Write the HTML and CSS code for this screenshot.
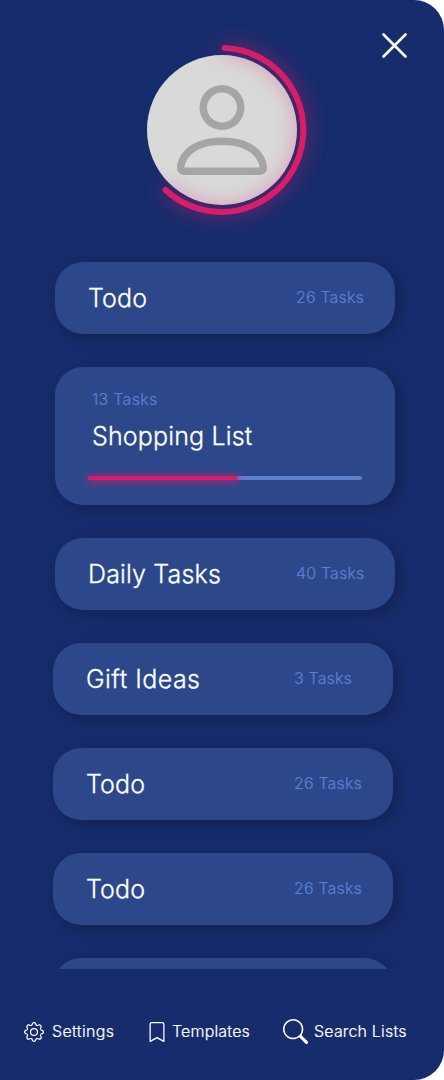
FILE: index.html
```html
<!DOCTYPE html>
<html lang="en">
<head>
<meta charset="utf-8">
<title>Task lists</title>
<link rel="stylesheet" href="styles.css">
</head>
<body>
<main class="drawer">
  <header class="profile">
    <svg class="avatar" viewBox="0 0 240 240" width="240" height="240">
      <circle cx="120" cy="120" r="75" fill="#d9d9d9"/>
      <g transform="translate(60 60) scale(7.5)" fill="#a5a5a5"><path d="M8 8a3 3 0 1 0 0-6 3 3 0 0 0 0 6zm2-3a2 2 0 1 1-4 0 2 2 0 0 1 4 0zm4 8c0 1-1 1-1 1H3s-1 0-1-1 1-4 6-4 6 3 6 4zm-1-.004c-.001-.246-.154-.986-.832-1.664C11.516 10.68 10.289 10 8 10c-2.29 0-3.516.68-4.168 1.332-.678.678-.83 1.418-.832 1.664h10z"/></g>
      <path class="ring" d="M122.500 38A82 82 0 1 1 63.500 180"/>
    </svg>
    <button class="close" aria-label="Close"><svg width="26" height="26" viewBox="0 0 26 26"><path d="M1.500 2.500l22 22M23.500 2.500L1.500 24.500"/></svg></button>
  </header>
  <section class="lists">
    <article class="card"><h2>Todo</h2><span class="count">26 Tasks</span></article>
    <article class="card featured">
      <span class="count">13 Tasks</span>
      <h2>Shopping List</h2>
      <div class="track"><div class="progress"></div></div>
    </article>
    <article class="card"><h2>Daily Tasks</h2><span class="count">40 Tasks</span></article>
    <article class="card shifted"><h2 class="wide">Gift Ideas</h2><span class="count">3 Tasks</span></article>
    <article class="card shifted"><h2>Todo</h2><span class="count">26 Tasks</span></article>
    <article class="card shifted"><h2>Todo</h2><span class="count">26 Tasks</span></article>
    <article class="card shifted"></article>
  </section>
  <nav class="footer">
    <a class="item settings"><svg width="20" height="20" viewBox="0 0 16 16"><path d="M8 4.754a3.246 3.246 0 1 0 0 6.492 3.246 3.246 0 0 0 0-6.492zM5.754 8a2.246 2.246 0 1 1 4.492 0 2.246 2.246 0 0 1-4.492 0z"/><path d="M9.796 1.343c-.527-1.790-3.065-1.790-3.592 0l-.094.319a.873.873 0 0 1-1.255.520l-.292-.160c-1.640-.892-3.433.902-2.540 2.541l.159.292a.873.873 0 0 1-.520 1.255l-.319.094c-1.790.527-1.790 3.065 0 3.592l.319.094a.873.873 0 0 1 .520 1.255l-.160.292c-.892 1.640.901 3.434 2.541 2.540l.292-.159a.873.873 0 0 1 1.255.520l.094.319c.527 1.790 3.065 1.790 3.592 0l.094-.319a.873.873 0 0 1 1.255-.520l.292.160c1.640.893 3.434-.902 2.540-2.541l-.159-.292a.873.873 0 0 1 .520-1.255l.319-.094c1.790-.527 1.790-3.065 0-3.592l-.319-.094a.873.873 0 0 1-.520-1.255l.160-.292c.893-1.640-.902-3.433-2.541-2.540l-.292.159a.873.873 0 0 1-1.255-.520l-.094-.319zm-2.633.283c.246-.835 1.428-.835 1.674 0l.094.319a1.873 1.873 0 0 0 2.693 1.115l.291-.160c.764-.415 1.600.420 1.184 1.185l-.159.292a1.873 1.873 0 0 0 1.116 2.692l.318.094c.835.246.835 1.428 0 1.674l-.319.094a1.873 1.873 0 0 0-1.115 2.693l.160.291c.415.764-.420 1.600-1.185 1.184l-.291-.159a1.873 1.873 0 0 0-2.693 1.116l-.094.318c-.246.835-1.428.835-1.674 0l-.094-.319a1.873 1.873 0 0 0-2.692-1.115l-.292.160c-.764.415-1.600-.420-1.184-1.185l.159-.291A1.873 1.873 0 0 0 1.945 8.930l-.319-.094c-.835-.246-.835-1.428 0-1.674l.319-.094A1.873 1.873 0 0 0 3.060 4.377l-.160-.292c-.415-.764.420-1.600 1.185-1.184l.292.159a1.873 1.873 0 0 0 2.692-1.115l.094-.319z"/></svg><span>Settings</span></a>
    <a class="item templates"><svg width="20" height="20" viewBox="0 0 16 16"><path d="M2 2a2 2 0 0 1 2-2h8a2 2 0 0 1 2 2v13.500a.5.5 0 0 1-.777.416L8 13.101l-5.223 2.815A.5.5 0 0 1 2 15.500V2zm2-1a1 1 0 0 0-1 1v12.566l4.723-2.482a.5.5 0 0 1 .554 0L13 14.566V2a1 1 0 0 0-1-1H4z"/></svg><span>Templates</span></a>
    <a class="item search"><svg width="25" height="25" viewBox="0 0 16 16"><path d="M11.742 10.344a6.500 6.500 0 1 0-1.397 1.398h-.001c.030.040.062.078.098.115l3.850 3.850a1 1 0 0 0 1.415-1.414l-3.850-3.850a1.007 1.007 0 0 0-.115-.100zM12 6.500a5.500 5.500 0 1 1-11 0 5.500 5.500 0 0 1 11 0z"/></svg><span>Search Lists</span></a>
  </nav>
</main>
</body>
</html>
```
FILE: styles.css
```css
* { box-sizing: border-box; }
body { margin: 0; background: #fff; font-family: Inter, "Liberation Sans", sans-serif; }
.drawer { width: 444px; height: 1080px; display: flex; flex-direction: column; background: #172c6c; border-radius: 0 30px 30px 0; overflow: hidden; color: #fff; }
.profile { position: relative; height: 250px; flex: none; padding: 10px 0 0 102px; }
.avatar { display: block; }
.ring { fill: none; stroke: #d91d6b; stroke-width: 6; stroke-linecap: round; filter: drop-shadow(0 0 10px rgba(217, 29, 107, .8)); }
.close { position: absolute; top: 32px; right: 36px; padding: 0; border: 0; background: none; line-height: 0; }
.close path { fill: none; stroke: #fff; stroke-width: 2.6; stroke-linecap: round; }
.lists { height: 719px; flex: none; overflow: hidden; padding: 12px 0 0 55px; display: flex; flex-direction: column; gap: 33px; }
.card { width: 340px; height: 72px; flex: none; display: flex; align-items: center; padding: 0 0 0 33px; border-radius: 28px; background: #2c488b; box-shadow: 4px 4px 15px rgba(0, 0, 0, .25); }
.card h2 { width: 208px; margin: 0; font-size: 25px; line-height: 30px; font-weight: 300; letter-spacing: .16px; -webkit-text-stroke: .3px; white-space: nowrap; }
.card .wide { letter-spacing: .45px; }
.count { padding-bottom: 2px; color: #5c80d2; font-size: 16px; line-height: 20px; font-weight: 300; letter-spacing: .15px; -webkit-text-stroke: .2px; white-space: nowrap; }
.shifted { margin-left: -2px; }
.featured { height: 138px; flex-direction: column; align-items: flex-start; padding-top: 22px; }
.featured .count { margin-left: 4px; padding-bottom: 0; letter-spacing: .28px; }
.featured h2 { margin: 12px 0 0 4px; }
.track { width: 274px; height: 4px; margin-top: 25px; border-radius: 2px; background: #5c80cc; }
.progress { width: 150px; height: 4px; border-radius: 2px; background: #d91d6b; box-shadow: 0 1px 9px 1px rgba(217, 29, 107, .75); }
.footer { height: 111px; display: flex; align-items: flex-start; padding: 50px 0 0 24px; font-size: 16px; font-weight: 300; letter-spacing: .17px; -webkit-text-stroke: .2px; }
.item { display: flex; align-items: center; height: 25px; white-space: nowrap; }
.item span { padding-bottom: 2px; }
.item svg { fill: #fff; flex: none; }
.settings { width: 123px; gap: 8px; }
.settings span { letter-spacing: .35px; }
.templates { width: 136px; gap: 5px; }
.search { gap: 6px; }
```
